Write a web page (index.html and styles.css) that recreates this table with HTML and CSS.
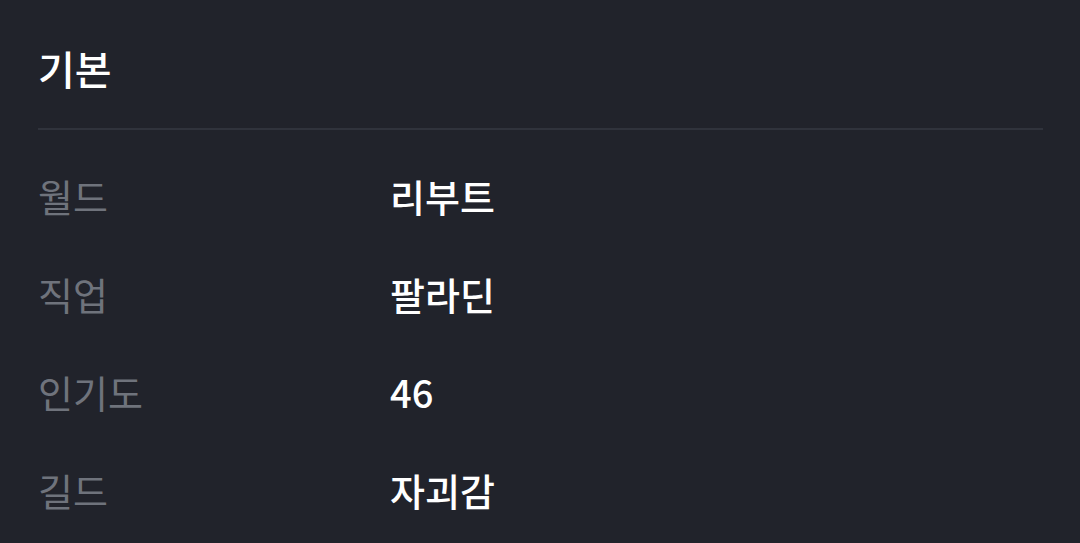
FILE: index.html
```html
<!DOCTYPE html>
<html lang="ko">
<head>
<meta charset="utf-8">
<link rel="stylesheet" href="styles.css">
</head>
<body>
<section class="panel">
  <h2 class="title">기본</h2>
  <div class="divider"></div>
  <dl class="info">
    <div class="row"><dt>월드</dt><dd>리부트</dd></div>
    <div class="row"><dt>직업</dt><dd>팔라딘</dd></div>
    <div class="row"><dt>인기도</dt><dd>46</dd></div>
    <div class="row"><dt>길드</dt><dd>자괴감</dd></div>
  </dl>
</section>
</body>
</html>
```
FILE: styles.css
```css
html, body {
  margin: 0;
  padding: 0;
  background: #21232b;
  height: 100%;
}
body {
  font-family: "Noto Sans CJK KR", "Noto Sans", sans-serif;
  overflow: hidden;
}
.panel {
  padding: 40px 37px 0 38px;
}
.title {
  margin: 0 0 32px 0;
  font-size: 40px;
  line-height: 56px;
  font-weight: 500;
  color: #ffffff;
}
.divider {
  height: 2px;
  background: #30333c;
}
.info {
  margin: 0;
  padding-top: 16px;
}
.row {
  display: flex;
  align-items: center;
  height: 98px;
}
.row dt {
  width: 352px;
  font-size: 38px;
  color: #6f737c;
  font-weight: 400;
}
.row dd {
  margin: 0;
  font-size: 38px;
  color: #ffffff;
  font-weight: 500;
}
```
